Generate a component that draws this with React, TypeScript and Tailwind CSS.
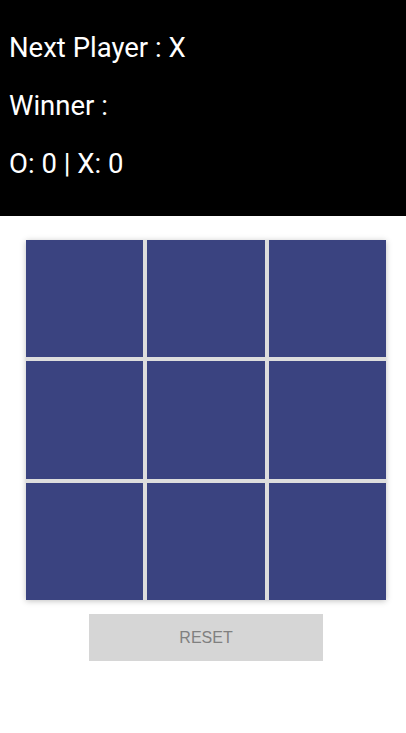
import React from "react";

export default function App() {
  const cells = Array.from({ length: 9 });
  return (
    <div className="w-[406px] min-h-[733px] bg-white" style={{ fontFamily: "Roboto, sans-serif" }}>
      <div className="h-[216px] bg-black text-white pl-[9px] pt-[32px] flex flex-col gap-[27px] text-[27.5px] leading-[31px]">
        <div>Next Player : X</div>
        <div>Winner :</div>
        <div>O: 0 | X: 0</div>
      </div>
      <div className="flex justify-center pt-[24px] pl-[6px]">
        <div className="w-[360px] h-[360px] grid grid-cols-3 grid-rows-3 gap-[4px] bg-[#dddddd] shadow-[0_1px_6px_rgba(0,0,0,0.25)]">
          {cells.map((_, i) => (
            <div key={i} className="bg-[#3a4380]" />
          ))}
        </div>
      </div>
      <div className="flex justify-center pt-[14px] pl-[6px]">
        <button
          className="w-[234px] h-[47px] bg-[#d6d6d6] text-[#808080] text-[16px]"
          style={{ fontFamily: '"Liberation Sans", Arial, sans-serif' }}
        >
          RESET
        </button>
      </div>
    </div>
  );
}
